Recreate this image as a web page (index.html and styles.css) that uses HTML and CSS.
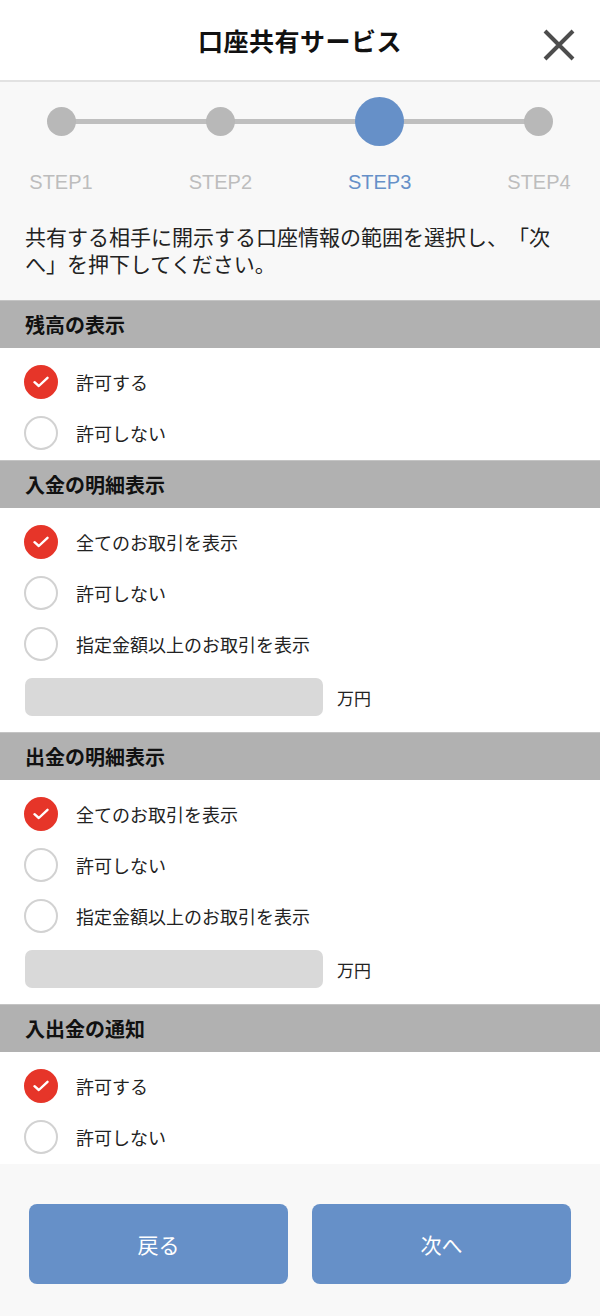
FILE: index.html
```html
<!DOCTYPE html>
<html lang="ja">
<head>
<meta charset="utf-8">
<title>口座共有サービス</title>
<link rel="stylesheet" href="styles.css">
</head>
<body>
<div class="page">
  <header class="topbar">
    <h1 class="title">口座共有サービス</h1>
    <button class="close" aria-label="閉じる">
      <svg width="34" height="34" viewBox="0 0 34 34"><path d="M3 3 L31 31 M31 3 L3 31" stroke="#4d4d4d" stroke-width="4" stroke-linecap="butt" fill="none"/></svg>
    </button>
  </header>

  <section class="intro">
    <div class="steps">
      <div class="step"><div class="dot-wrap"><span class="dot"></span></div><span class="step-label">STEP1</span></div>
      <div class="step"><div class="dot-wrap"><span class="dot"></span></div><span class="step-label">STEP2</span></div>
      <div class="step active"><div class="dot-wrap"><span class="dot"></span></div><span class="step-label">STEP3</span></div>
      <div class="step"><div class="dot-wrap"><span class="dot"></span></div><span class="step-label">STEP4</span></div>
    </div>
    <p class="lead">共有する相手に開示する口座情報の範囲を選択し、「次へ」を押下してください。</p>
  </section>

  <section class="group">
    <h2 class="group-title">残高の表示</h2>
    <div class="group-body">
      <div class="option"><span class="radio checked"><svg width="16" height="12" viewBox="0 0 16 12"><path d="M1.5 6.2 L5.8 10 L14.5 1.8" stroke="#fff" stroke-width="2.4" fill="none" stroke-linecap="round" stroke-linejoin="round"/></svg></span><span class="opt-text">許可する</span></div>
      <div class="option"><span class="radio"></span><span class="opt-text">許可しない</span></div>
    </div>
  </section>

  <section class="group">
    <h2 class="group-title">入金の明細表示</h2>
    <div class="group-body">
      <div class="option"><span class="radio checked"><svg width="16" height="12" viewBox="0 0 16 12"><path d="M1.5 6.2 L5.8 10 L14.5 1.8" stroke="#fff" stroke-width="2.4" fill="none" stroke-linecap="round" stroke-linejoin="round"/></svg></span><span class="opt-text">全てのお取引を表示</span></div>
      <div class="option"><span class="radio"></span><span class="opt-text">許可しない</span></div>
      <div class="option"><span class="radio"></span><span class="opt-text">指定金額以上のお取引を表示</span></div>
      <div class="amount"><input class="amount-input" type="text"><span class="unit">万円</span></div>
    </div>
  </section>

  <section class="group">
    <h2 class="group-title">出金の明細表示</h2>
    <div class="group-body">
      <div class="option"><span class="radio checked"><svg width="16" height="12" viewBox="0 0 16 12"><path d="M1.5 6.2 L5.8 10 L14.5 1.8" stroke="#fff" stroke-width="2.4" fill="none" stroke-linecap="round" stroke-linejoin="round"/></svg></span><span class="opt-text">全てのお取引を表示</span></div>
      <div class="option"><span class="radio"></span><span class="opt-text">許可しない</span></div>
      <div class="option"><span class="radio"></span><span class="opt-text">指定金額以上のお取引を表示</span></div>
      <div class="amount"><input class="amount-input" type="text"><span class="unit">万円</span></div>
    </div>
  </section>

  <section class="group">
    <h2 class="group-title">入出金の通知</h2>
    <div class="group-body">
      <div class="option"><span class="radio checked"><svg width="16" height="12" viewBox="0 0 16 12"><path d="M1.5 6.2 L5.8 10 L14.5 1.8" stroke="#fff" stroke-width="2.4" fill="none" stroke-linecap="round" stroke-linejoin="round"/></svg></span><span class="opt-text">許可する</span></div>
      <div class="option"><span class="radio"></span><span class="opt-text">許可しない</span></div>
    </div>
  </section>

  <footer class="actions">
    <button class="btn">戻る</button>
    <button class="btn">次へ</button>
  </footer>
</div>
</body>
</html>
```

FILE: styles.css
```css
* { box-sizing: border-box; }
html, body { margin: 0; padding: 0; }
body {
  width: 600px;
  background: #f8f8f8;
  font-family: "Noto Sans CJK JP", "Noto Sans", sans-serif;
  color: #222;
  text-spacing-trim: space-all;
}
.page { width: 600px; }

.topbar {
  height: 82px;
  background: #fff;
  border-bottom: 2px solid #e2e2e2;
  display: flex;
  align-items: center;
  justify-content: center;
  position: relative;
}
.title {
  margin: 0;
  font-size: 25px;
  font-weight: 700;
  color: #111;
  letter-spacing: 0.5px;
}
.close {
  position: absolute;
  right: 24px;
  top: 28px;
  width: 34px;
  height: 34px;
  padding: 0;
  border: 0;
  background: transparent;
  display: flex;
}

.intro {
  background: #f8f8f8;
  padding-top: 14px;
}
.steps {
  position: relative;
  display: flex;
  justify-content: space-between;
  padding: 0 21px;
}
.steps::before {
  content: "";
  position: absolute;
  left: 62px;
  right: 62px;
  top: 23px;
  height: 5px;
  background: #bfbfbf;
}
.step {
  width: 80px;
  display: flex;
  flex-direction: column;
  align-items: center;
  position: relative;
}
.dot-wrap {
  height: 50px;
  display: flex;
  align-items: center;
  justify-content: center;
}
.dot {
  width: 29px;
  height: 29px;
  border-radius: 50%;
  background: #b8b8b8;
}
.step.active .dot {
  width: 49px;
  height: 49px;
  background: #6690c8;
}
.step-label {
  margin-top: 24px;
  font-family: "Liberation Sans", Arial, sans-serif;
  font-size: 20px;
  line-height: 24px;
  color: #bdbdbd;
}
.step.active .step-label { color: #6690c8; }

.lead {
  margin: 0;
  padding: 29px 25px 23px 25px;
  font-size: 21px;
  line-height: 27px;
  color: #222;
  text-spacing-trim: space-all;
  line-break: strict;
}

.group { background: #fff; }
.group-title {
  margin: 0;
  height: 48px;
  padding-left: 25px;
  display: flex;
  align-items: center;
  background: #b1b1b1;
  border-top: 1px solid #c4c4c4;
  font-size: 20px;
  font-weight: 700;
  color: #111;
}
.group-body {
  padding: 8px 0 2px;
}
.option {
  height: 51px;
  display: flex;
  align-items: center;
  padding-left: 24px;
  gap: 18px;
}
.radio {
  width: 34px;
  height: 34px;
  border-radius: 50%;
  border: 2px solid #d2d2d2;
  background: #fff;
  display: flex;
  align-items: center;
  justify-content: center;
  flex: none;
}
.radio.checked {
  background: #e63529;
  border-color: #e63529;
}
.opt-text {
  font-size: 18px;
  color: #222;
}
.amount {
  display: flex;
  align-items: center;
  padding: 9px 0 14px 25px;
}
.amount-input {
  width: 298px;
  height: 38px;
  border: 0;
  border-radius: 7px;
  background: #d9d9d9;
  outline: none;
}
.unit {
  margin-left: 14px;
  font-size: 17px;
  color: #222;
}

.actions {
  background: #f8f8f8;
  display: flex;
  gap: 24px;
  padding: 40px 29px 33px;
}
.btn {
  flex: 1;
  height: 80px;
  border: 0;
  border-radius: 8px;
  background: #6690c8;
  color: #fff;
  font-family: "Noto Sans CJK JP", sans-serif;
  font-size: 21px;
}
```
